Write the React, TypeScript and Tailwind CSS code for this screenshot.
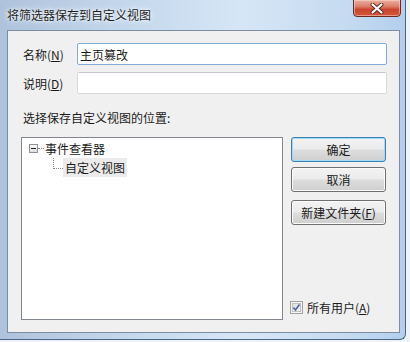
import React from 'react';

const font = "font-['Noto_Sans_CJK_SC',sans-serif]";

function Win7Button({ children, isDefault }: { children: React.ReactNode; isDefault?: boolean }) {
    return (
        <button
            className={`h-[25px] w-[95px] rounded-[3px] border text-[12px] leading-[17px] text-[#1b1b1b] bg-[linear-gradient(#f3f3f3_0%,#ebebeb_48%,#dddddd_52%,#cfcfcf_100%)] ${
                isDefault
                    ? 'border-[#3c7fb1] shadow-[inset_0_0_0_1px_#9fdbf7]'
                    : 'border-[#707070] shadow-[inset_0_0_0_1px_#fbfbfb]'
            }`}
        >
            {children}
        </button>
    );
}

export default function App() {
    return (
        <div className={`w-[410px] h-[342px] bg-[#eef3f9] overflow-hidden ${font}`}>
            <div className="w-[406px] h-[340px] flex flex-col border-r border-b border-[#4b6584] rounded-br-[6px] bg-[linear-gradient(90deg,#aec3db_0%,#c3d7ec_30%,#d6e6f6_60%,#c6dbf1_85%,#b3cfed_100%)]">
                {/* title bar */}
                <div className="h-[30px] flex items-start justify-between pl-[7px] pr-[4px]">
                    <span className="mt-[6px] text-[12px] leading-[17px] text-[#1e1e1e] [text-shadow:0_0_6px_#ffffff,0_0_3px_#ffffff]">
                        将筛选器保存到自定义视图
                    </span>
                    <div className="w-[48px] h-[18px] -mt-px flex items-center justify-center rounded-b-[4px] border border-[#6b2a1f] bg-[linear-gradient(#eab0a1_0%,#dc7e69_40%,#c8452f_60%,#d4573c_100%)] shadow-[inset_0_0_0_1px_rgba(255,220,210,0.5)]">
                        <svg width="14" height="11" viewBox="0 0 14 11">
                            <path d="M2.5 1.5 L11.5 9.5 M11.5 1.5 L2.5 9.5" stroke="#5a2a22" strokeWidth="4" strokeLinecap="round" />
                            <path d="M2.5 1.5 L11.5 9.5 M11.5 1.5 L2.5 9.5" stroke="#ffffff" strokeWidth="2.2" strokeLinecap="round" />
                        </svg>
                    </div>
                </div>

                {/* client area */}
                <div className="ml-[7px] w-[393px] h-[303px] border border-[#7d8ca1] bg-[#f0f0f0] pt-[12px] pl-[13px] pr-[12px] pb-[12px] flex flex-col text-[12px] leading-[17px] text-[#1b1b1b]">
                    <div className="flex items-center h-[22px]">
                        <label className="w-[56px] pl-[2px]">
                            名称(<u>N</u>)
                        </label>
                        <div className="w-[310px] h-[22px] border border-[#84acd9] rounded-[2px] bg-white pl-[2px] flex items-center">
                            主页篡改
                        </div>
                    </div>
                    <div className="flex items-center h-[22px] mt-[7px]">
                        <label className="w-[56px] pl-[2px]">
                            说明(<u>D</u>)
                        </label>
                        <div className="w-[310px] h-[22px] border border-[#d6d9de] border-t-[#c6c9cf] rounded-[2px] bg-white" />
                    </div>

                    <p className="mt-[15px] pl-[2px]">选择保存自定义视图的位置:</p>

                    <div className="mt-[11px] flex">
                        {/* tree */}
                        <div className="w-[262px] h-[183px] border border-[#828790] bg-white">
                            <div className="h-[20px] flex items-center pl-[7px]">
                                <svg width="9" height="9" viewBox="0 0 9 9" className="shrink-0">
                                    <defs>
                                        <linearGradient id="exp" x1="0" y1="0" x2="0" y2="1">
                                            <stop offset="0" stopColor="#ffffff" />
                                            <stop offset="1" stopColor="#dcdcdc" />
                                        </linearGradient>
                                    </defs>
                                    <rect x="0.5" y="0.5" width="8" height="8" fill="url(#exp)" stroke="#919191" />
                                    <path d="M2 4.5 H7" stroke="#1e1e1e" />
                                </svg>
                                <div className="w-[6px] border-t border-dotted border-[#8a8a8a]" />
                                <span className="ml-[1px]">事件查看器</span>
                            </div>
                            <div className="h-[20px] flex items-start pl-[31px]">
                                <div className="w-[10px] h-[11px] border-l border-b border-dotted border-[#8a8a8a]" />
                                <span className="h-[19px] px-[2px] bg-[#ebebeb] flex items-center">自定义视图</span>
                            </div>
                        </div>

                        {/* buttons */}
                        <div className="ml-[8px] flex flex-col">
                            <Win7Button isDefault>确定</Win7Button>
                            <div className="mt-[5px]">
                                <Win7Button>取消</Win7Button>
                            </div>
                            <div className="mt-[8px]">
                                <Win7Button>
                                    新建文件夹(<u>F</u>)
                                </Win7Button>
                            </div>
                            <div className="mt-auto mb-[6px] -ml-px flex items-center h-[13px]">
                                <svg width="13" height="13" viewBox="0 0 13 13" className="shrink-0">
                                    <defs>
                                        <linearGradient id="cb" x1="0" y1="0" x2="1" y2="1">
                                            <stop offset="0" stopColor="#dcdcdc" />
                                            <stop offset="1" stopColor="#fbfbfb" />
                                        </linearGradient>
                                    </defs>
                                    <rect x="0.5" y="0.5" width="12" height="12" fill="#f4f4f4" stroke="#a3a3a3" />
                                    <rect x="2.5" y="2.5" width="8" height="8" fill="url(#cb)" stroke="#c2c2c2" />
                                    <path d="M3.5 6.5 L5.5 9 L9.5 3.5" fill="none" stroke="#4a62a0" strokeWidth="1.6" />
                                </svg>
                                <span className="ml-[4px]">
                                    所有用户(<u>A</u>)
                                </span>
                            </div>
                        </div>
                    </div>
                </div>
            </div>
        </div>
    );
}
